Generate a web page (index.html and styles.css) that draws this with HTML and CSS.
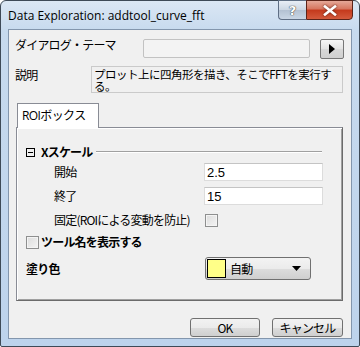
FILE: index.html
```html
<!DOCTYPE html>
<html lang="ja">
<head>
<meta charset="utf-8">
<title>Data Exploration</title>
<link rel="stylesheet" href="styles.css">
</head>
<body>
<div class="window">
  <div class="titlebar">
    <span class="title">Data Exploration: addtool_curve_fft</span>
    <div class="caption-btns">
      <div class="cbtn help">?</div>
      <div class="cbtn close">
        <svg width="14" height="11" viewBox="0 0 14 11"><path d="M2 1.5 L12 9.5 M12 1.5 L2 9.5" stroke="#fff" stroke-width="2.6" stroke-linecap="square"/></svg>
      </div>
    </div>
  </div>
  <div class="client">
    <div class="theme-row">
      <span class="lbl">ダイアログ・テーマ</span>
      <div class="theme-field"></div>
      <div class="play-btn">
        <svg width="8" height="10" viewBox="0 0 8 10"><path d="M1 0 L7 5 L1 10 Z" fill="#000"/></svg>
      </div>
    </div>
    <div class="desc-row">
      <span class="lbl">説明</span>
      <div class="desc"><span class="dline">プロット上に四角形を描き、そこでFFTを実行す</span><span class="dline">る。</span></div>
    </div>
    <div class="tabs">
      <div class="tab">ROIボックス</div>
    </div>
    <div class="panel">
      <div class="group-head">
        <span class="minus"></span>
        <span class="bold">Xスケール</span>
        <span class="rule"></span>
      </div>
      <div class="frow r1">
        <span class="flbl">開始</span>
        <div class="tbox">2.5</div>
      </div>
      <div class="frow r2">
        <span class="flbl">終了</span>
        <div class="tbox">15</div>
      </div>
      <div class="frow r3">
        <span class="flbl">固定(ROIによる変動を防止)</span>
        <span class="chk"></span>
      </div>
      <div class="showname">
        <span class="chk"></span>
        <span class="bold">ツール名を表示する</span>
      </div>
      <div class="fillrow">
        <span class="bold">塗り色</span>
        <div class="combo">
          <span class="swatch"></span>
          <span class="ctext">自動</span>
          <svg class="arrow" width="9" height="5" viewBox="0 0 9 5"><path d="M0 0 H9 L4.5 5 Z" fill="#000"/></svg>
        </div>
      </div>
    </div>
    <div class="buttons">
      <div class="btn">OK</div>
      <div class="btn">キャンセル</div>
    </div>
  </div>
</div>
</body>
</html>
```
FILE: styles.css
```css
* { box-sizing: border-box; }
html, body { margin: 0; padding: 0; background: #fff; }
body { width: 360px; height: 347px; overflow: hidden; }

.window {
  width: 360px;
  height: 347px;
  border: 1px solid #3e4a57;
  border-radius: 6px 6px 2px 2px;
  background: linear-gradient(#dbe7f4 0px, #c7daee 30px, #bdd3ec 100%);
  display: flex;
  flex-direction: column;
  font-family: "Noto Sans CJK JP", sans-serif;
  font-size: 12px;
  color: #000;
}

.titlebar {
  height: 28px;
  display: flex;
  align-items: flex-start;
  justify-content: space-between;
  flex: none;
}
.title {
  font-family: "Open Sans", "Noto Sans", sans-serif;
  font-size: 12px;
  margin: 8px 0 0 7px;
  line-height: 14px;
  color: #000;
}
.caption-btns {
  display: flex;
  margin-right: 6px;
  margin-top: -1px;
}
.cbtn {
  height: 20px;
  border: 1px solid #5e6e84;
  display: flex;
  align-items: center;
  justify-content: center;
}
.help {
  width: 28px;
  border-radius: 0 0 0 4px;
  border-right: none;
  background: linear-gradient(#e8eef6 0%, #cbd6e3 50%, #b3c1d2 51%, #c9d6e5 100%);
  color: #fff;
  font-family: "DejaVu Sans", sans-serif;
  font-weight: bold;
  font-size: 13px;
  text-shadow: 0 0 1px #333, 0 0 1px #333;
}
.close {
  width: 47px;
  border-radius: 0 0 4px 0;
  background: linear-gradient(#e5a898 0%, #d6755e 45%, #c4391c 50%, #d45a3c 100%);
  border-color: #5c2318;
}
.close svg { filter: drop-shadow(0 0 1px #5a1a0e); }

.client {
  flex: 1;
  margin: 0 7px 7px 7px;
  border: 1px solid #8396ad;
  background: #f0f0f0;
  display: flex;
  flex-direction: column;
  line-height: 14px;
  letter-spacing: -0.8px;
}

.lbl { padding-left: 6px; }

.theme-row {
  margin-top: 9px;
  display: flex;
  align-items: flex-start;
}
.theme-row .lbl { width: 134px; margin-top: -1px; }
.theme-field {
  width: 167px;
  height: 19px;
  border: 1px solid #c2c2c2;
  border-radius: 2px;
  background: #f3f3f3;
}
.play-btn {
  margin-left: 10px;
  width: 24px;
  height: 20px;
  border: 1px solid #777;
  border-radius: 2px;
  background: linear-gradient(#f6f6f6, #e3e3e3 50%, #d8d8d8 51%, #d0d0d0);
  display: flex;
  align-items: center;
  justify-content: center;
}

.desc-row {
  margin-top: 7px;
  display: flex;
  align-items: flex-start;
}
.desc-row .lbl { width: 82px; margin-top: 2px; }
.desc {
  width: 252px;
  height: 27px;
  border: 1px solid #cacaca;
  padding: 1px 0 0 2px;
  background: #f0f0f0;
  display: flex;
  flex-direction: column;
}
.dline {
  display: block;
  font-size: 11.5px;
  line-height: 12px;
  letter-spacing: -0.5px;
  white-space: nowrap;
}

.tabs {
  margin-top: 10px;
  padding-left: 8px;
  display: flex;
  height: 24px;
  position: relative;
  z-index: 1;
}
.tab {
  width: 82px;
  height: 25px;
  border: 1px solid #898c95;
  border-bottom: none;
  background: #fff;
  padding: 5px 0 0 4px;
  font-family: "Open Sans", "Noto Sans CJK JP", sans-serif;
  letter-spacing: -0.6px;
}

.panel {
  margin: 0 8px 0 7px;
  height: 174px;
  border: 1px solid #898c95;
  border-right-color: #6b6b6b;
  border-bottom-color: #6b6b6b;
  box-shadow: inset 1px 1px 0 #fff, inset -1px -1px 0 #a0a0a0;
  background: #f0f0f0;
  padding: 0 0 0 9px;
  display: flex;
  flex-direction: column;
}
.bold { font-weight: bold; }

.group-head {
  margin-top: 17px;
  height: 14px;
  display: flex;
  align-items: center;
}
.minus {
  width: 9px;
  height: 9px;
  border: 1px solid #000;
  position: relative;
  margin-right: 6px;
  flex: none;
}
.minus::after {
  content: "";
  position: absolute;
  left: 1px;
  top: 3px;
  width: 5px;
  height: 1px;
  background: #000;
}
.group-head .bold { font-size: 12px; }
.rule {
  margin-left: 3px;
  width: 226px;
  height: 2px;
  border-top: 1px solid #a0a0a0;
  border-bottom: 1px solid #fff;
}

.frow {
  display: flex;
  align-items: center;
  height: 18px;
}
.r1 { margin-top: 4px; }
.r2 { margin-top: 6px; }
.r3 { margin-top: 6px; }
.flbl { width: 178px; padding-left: 28px; flex: none; }
.tbox {
  width: 119px;
  height: 18px;
  background: #fff;
  border: 1px solid #dcdcdc;
  border-top-color: #c4c4c4;
  padding: 1px 0 0 2px;
  letter-spacing: 0;
  font-family: "Liberation Sans", sans-serif;
  font-size: 13px;
  line-height: 15px;
}
.chk {
  width: 13px;
  height: 13px;
  border: 1px solid #8e8f8f;
  background: linear-gradient(135deg, #dcdcdc, #f4f4f4);
  box-shadow: inset 0 0 0 1px #f4f4f4;
  flex: none;
}
.r3 .chk { margin-left: 1px; }

.showname {
  margin-top: 4px;
  height: 18px;
  display: flex;
  align-items: center;
}
.showname .chk { margin-right: 2px; }

.fillrow {
  margin-top: 6px;
  display: flex;
  align-items: center;
  height: 23px;
}
.fillrow .bold { width: 179px; flex: none; }
.combo {
  width: 106px;
  height: 23px;
  border: 1px solid #707070;
  border-radius: 3px;
  background: linear-gradient(#f3f3f3, #ebebeb 50%, #dddddd 51%, #cfcfcf);
  display: flex;
  align-items: center;
  padding-left: 1px;
}
.swatch {
  width: 19px;
  height: 19px;
  background: #ffff88;
  border: 1px solid #000;
  flex: none;
}
.ctext { margin-left: 4px; flex: 1; }
.arrow { margin-right: 9px; }

.buttons {
  margin-top: 17px;
  display: flex;
  justify-content: flex-end;
  gap: 12px;
  padding-right: 8px;
}
.btn {
  width: 71px;
  height: 19px;
  border: 1px solid #707070;
  border-radius: 3px;
  background: linear-gradient(#f2f2f2, #ebebeb 50%, #dddddd 51%, #cfcfcf);
  display: flex;
  align-items: center;
  justify-content: center;
  font-size: 12px;
}
.btn:first-child { width: 70px; }
```
